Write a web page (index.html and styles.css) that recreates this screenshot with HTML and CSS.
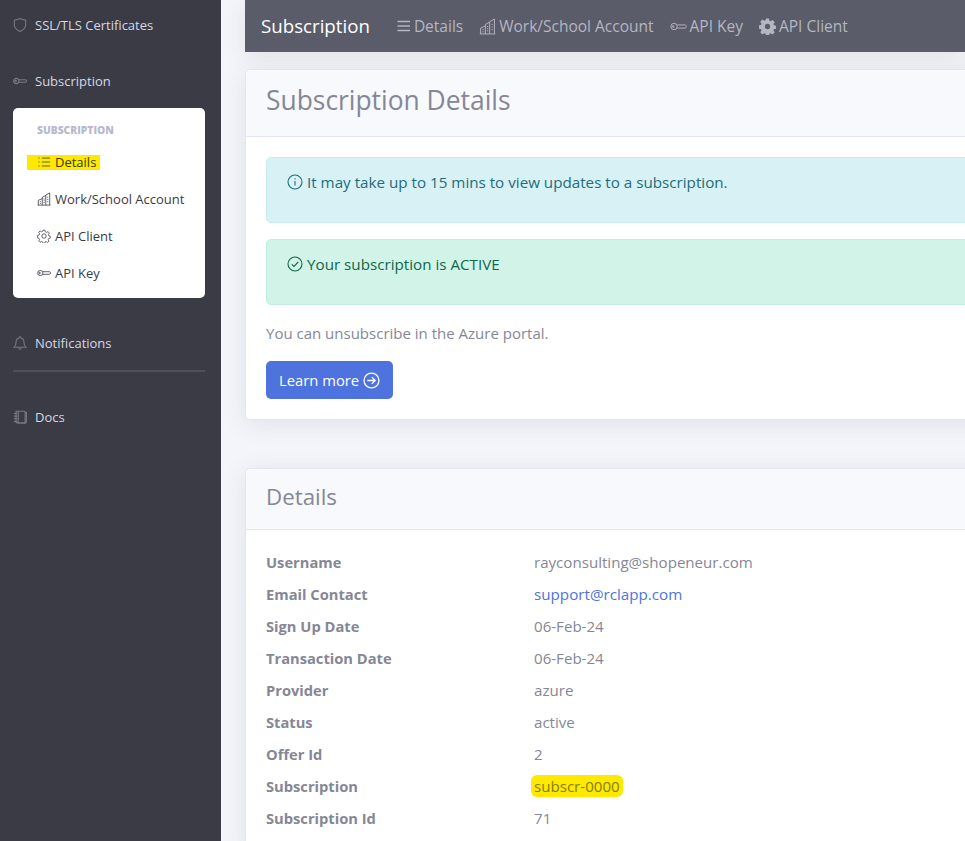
FILE: index.html
```html
<!DOCTYPE html>
<html>

<head>
  <meta charset="utf-8">
  <title>Subscription</title>
  <link rel="stylesheet" href="styles.css">
</head>

<body>

  <div class="wrapper">

    <div class="sidebar">

      <a class="navLink firstLink">
        <svg class="navIcon" viewBox="0 0 16 16"><path d="M8 .6c2.200 1 4.400 1.500 6.500 1.700v5.700c0 3.300-2.700 5.700-6.500 7.400C4.200 13.700 1.500 11.300 1.500 8V2.300C3.600 2.100 5.800 1.600 8 .6z"/></svg>
        <span>SSL/TLS Certificates</span>
      </a>

      <a class="navLink subLink">
        <svg class="navIcon" viewBox="0 0 16 16"><circle cx="3.800" cy="8" r="3"/><circle cx="3" cy="8" r=".8"/><path d="M6.800 6.500h7.700l1.200 1.500-1.200 1.500H6.800"/></svg>
        <span>Subscription</span>
      </a>

      <div class="subMenu">
        <h6 class="subTitle">SUBSCRIPTION</h6>
        <a class="subItem subItemFirst">
          <span class="marker">
            <svg class="subIcon" viewBox="0 0 16 16"><path d="M5.500 3.500H15M5.500 8H15M5.500 12.500H15"/><path d="M1.500 3.500h1.500M1.500 8h1.500M1.500 12.500h1.500"/></svg>
            Details
          </span>
        </a>
        <a class="subItem">
          <svg class="subIcon" viewBox="0 0 16 16"><path d="M.7 15h14.600M1.500 15V9.500L6 7.500M6 15V6l4-2M10 15V3.500L14.500 1v14M3.200 11h1.200M3.200 13h1.200M7.500 8h1.200M7.500 10h1.200M7.500 12h1.200M11.700 6h1.200M11.700 8.500h1.200M11.700 11h1.200"/></svg>
          Work/School Account
        </a>
        <a class="subItem">
          <svg class="subIcon" viewBox="0 0 16 16"><circle cx="8" cy="8" r="2.500"/><path d="M6.800 1h2.400l.4 2 1.500.7 1.800-1 1.500 1.800-1.100 1.700.5 1.600 1.700.5v2.200l-1.900.5-.6 1.500 1 1.700-1.600 1.500-1.700-1-1.500.6-.5 1.700H6.900l-.5-1.800-1.500-.6-1.700 1-1.600-1.600 1-1.700-.6-1.500-1.700-.5V7.300l1.800-.5.6-1.600-1-1.700 1.600-1.600 1.700 1 1.500-.6z" transform="translate(.4 .4) scale(.95)"/></svg>
          API Client
        </a>
        <a class="subItem">
          <svg class="subIcon" viewBox="0 0 16 16"><circle cx="3.800" cy="8" r="3"/><circle cx="3" cy="8" r=".8"/><path d="M6.800 6.500h7.700l1.200 1.500-1.200 1.500H6.800"/></svg>
          API Key
        </a>
      </div>

      <a class="navLink noteLink">
        <svg class="navIcon" viewBox="0 0 16 16"><path d="M8 .8c-.6 0-1 .4-1 1v.5C4.800 2.800 3.500 4.500 3.500 7c0 3-1 4.800-2.200 5.800h13.400C13.500 11.800 12.500 10 12.500 7c0-2.500-1.300-4.200-3.500-4.700v-.5c0-.6-.4-1-1-1zM6.400 14.200c.4 1.200 2.800 1.200 3.200 0"/></svg>
        <span>Notifications</span>
      </a>

      <hr class="sideLine">

      <a class="navLink">
        <svg class="navIcon" viewBox="0 0 16 16"><path d="M3.500 1.500h9.500c.5 0 .8.300.8.800v11.400c0 .5-.3.800-.8.800H3.500zM6 1.500v13M13.800 3h1.500v11l-1 1.200H5M1 4h4M1 7h4M1 10h4M1 13h4"/></svg>
        <span>Docs</span>
      </a>

    </div>

    <div class="main">

      <div class="topBar">
        <span class="brand">Subscription</span>
        <a class="topLink">
          <svg class="topIcon barsIcon" viewBox="0 0 15 17"><path class="bars" d="M1.500 3.500h12.500M1.500 8h12.500M1.500 12.500h12.500"/></svg>
          Details
        </a>
        <a class="topLink">
          <svg class="topIcon" viewBox="0 0 16 16"><path d="M.7 15h14.600M1.500 15V9.500L6 7.500M6 15V6l4-2M10 15V3.500L14.500 1v14M3.200 11h1.200M3.200 13h1.200M7.500 8h1.200M7.500 10h1.200M7.500 12h1.200M11.700 6h1.200M11.700 8.500h1.200M11.700 11h1.200"/></svg>
          Work/School Account
        </a>
        <a class="topLink">
          <svg class="topIcon" viewBox="0 0 16 16"><circle cx="3.800" cy="8" r="3"/><circle cx="3" cy="8" r=".8"/><path d="M6.800 6.500h7.700l1.200 1.500-1.200 1.500H6.800"/></svg>
          API Key
        </a>
        <a class="topLink">
          <svg class="topIcon solid" viewBox="0 0 16 16"><path fill-rule="evenodd" d="M6.600.5h2.800l.4 2.100 1.200.5 1.800-1.200 2 2-1.200 1.800.5 1.200 2.100.4v2.800l-2.100.4-.5 1.200 1.200 1.800-2 2-1.800-1.200-1.200.5-.4 2.100H6.600l-.4-2.100-1.200-.5-1.800 1.200-2-2 1.200-1.800-.5-1.200-2.100-.4V6.900l2.100-.4.5-1.200-1.200-1.800 2-2 1.800 1.200 1.200-.5zM8 5.500a2.500 2.500 0 1 0 0 5 2.500 2.500 0 0 0 0-5z"/></svg>
          API Client
        </a>
      </div>

      <div class="card firstCard">
        <div class="cardHeader headerBig">
          <h1>Subscription Details</h1>
        </div>
        <div class="cardBody">
          <div class="alert alertInfo">
            <svg class="alertIcon" viewBox="0 0 16 16"><circle cx="8" cy="8" r="7"/><path d="M8 7v4.500M8 4.300v1.200"/></svg>
            It may take up to 15 mins to view updates to a subscription.
          </div>
          <div class="alert alertOk">
            <svg class="alertIcon" viewBox="0 0 16 16"><circle cx="8" cy="8" r="7"/><path d="M4.800 8.300l2.200 2.200 4.200-4.500"/></svg>
            Your subscription is ACTIVE
          </div>
          <p class="note">You can unsubscribe in the Azure portal.</p>
          <a class="btnLearn">
            Learn more
            <svg class="btnIcon" viewBox="0 0 16 16"><circle cx="8" cy="8" r="7"/><path d="M4 8h7.500M8.300 4.800L11.500 8l-3.200 3.200"/></svg>
          </a>
        </div>
      </div>

      <div class="card secondCard">
        <div class="cardHeader">
          <h2>Details</h2>
        </div>
        <div class="detailsList">
          <div class="row"><b>Username</b><span>rayconsulting@shopeneur.com</span></div>
          <div class="row"><b>Email Contact</b><a class="mail">support@rclapp.com</a></div>
          <div class="row"><b>Sign Up Date</b><span>06-Feb-24</span></div>
          <div class="row"><b>Transaction Date</b><span>06-Feb-24</span></div>
          <div class="row"><b>Provider</b><span>azure</span></div>
          <div class="row"><b>Status</b><span>active</span></div>
          <div class="row"><b>Offer Id</b><span>2</span></div>
          <div class="row"><b>Subscription</b><span><span class="mark2">subscr-0000</span></span></div>
          <div class="row"><b>Subscription Id</b><span>71</span></div>
        </div>
      </div>

    </div>

  </div>

</body>

</html>
```

FILE: styles.css
```css
html, body {
  margin: 0;
  height: 841px;
  overflow: hidden;
}

body {
  font-family: "Open Sans", "Noto Sans", sans-serif;
  font-size: 15px;
  color: #858796;
  background-color: #f3f5fa;
}

.wrapper {
  display: flex;
  height: 841px;
}

.sidebar {
  width: 221px;
  flex: none;
  box-sizing: border-box;
  padding: 15px 16px 0 13px;
  background-color: #3a3b45;
}

.navLink {
  display: flex;
  align-items: center;
  gap: 8px;
  height: 20px;
  font-size: 13px;
  color: #d5d8e4;
}

.navIcon {
  width: 14px;
  height: 16px;
  flex: none;
  fill: none;
  stroke: #787a85;
  stroke-width: 1.200;
}

.subLink {
  margin-top: 36px;
}

.subMenu {
  height: 190px;
  margin-top: 17px;
  box-sizing: border-box;
  padding: 16px 0 0 24px;
  background-color: #fff;
  border-radius: 5px;
}

.subTitle {
  margin: 0;
  font-size: 10.300px;
  line-height: 12px;
  font-weight: 800;
  color: #b7b9cc;
}

.subItem {
  display: flex;
  align-items: center;
  gap: 4px;
  height: 20px;
  margin-top: 17px;
  font-size: 13px;
  color: #3a3b45;
}

.subItemFirst {
  margin: 16px 0 0 -10px;
}

.marker {
  display: flex;
  align-items: center;
  gap: 4px;
  height: 15px;
  padding: 0 4px 0 10px;
  color: #38380a;
  background-color: #ffe900;
}

.subIcon {
  width: 14px;
  height: 14px;
  flex: none;
  fill: none;
  stroke: #3a3b45;
  stroke-width: .9;
}

.noteLink {
  margin-top: 35px;
}

.sideLine {
  height: 2px;
  margin: 17px 0 35px;
  border: none;
  background-color: #4f505b;
}

.main {
  flex: 1;
  min-width: 0;
  padding-left: 24px;
  overflow: hidden;
}

.topBar {
  display: flex;
  align-items: center;
  height: 52px;
  box-sizing: border-box;
  padding-left: 16px;
  background-color: #5a5c69;
  box-shadow: 0 4px 24px rgba(58, 59, 69, .1);
}

.brand {
  margin: -2px 26px 0 0;
  font-size: 18.700px;
  color: #fff;
}

.topLink {
  display: flex;
  align-items: center;
  gap: 3px;
  margin-right: 16px;
  font-size: 15.500px;
  color: #b4b6c1;
}

.topIcon {
  width: 17px;
  height: 17px;
  flex: none;
  fill: none;
  stroke: #b4b6c1;
  stroke-width: .9;
}

.topIcon.barsIcon {
  width: 15px;
}

.topIcon .bars {
  stroke-width: 1.700;
}

.topIcon.solid {
  fill: #b4b6c1;
  stroke: none;
}

.card {
  width: 780px;
  background-color: #fff;
  border: 1px solid #e3e6f0;
  border-radius: 5px;
  box-shadow: 0 4px 24px rgba(58, 59, 69, .1);
}

.firstCard {
  margin-top: 17px;
  height: 351px;
  box-sizing: border-box;
}

.secondCard {
  margin-top: 48px;
}

.cardHeader {
  display: flex;
  align-items: center;
  height: 54px;
  padding: 0 0 6px 20px;
  background-color: #f8f9fc;
  border-bottom: 1px solid #e3e6f0;
  border-radius: 5px 5px 0 0;
}

.headerBig {
  height: 60px;
}

h1 {
  margin: 0;
  font-size: 26.400px;
  font-weight: 400;
}

h2 {
  margin: 0;
  font-size: 22.300px;
  font-weight: 400;
}

.cardBody {
  padding: 20px;
}

.alert {
  display: flex;
  align-items: flex-start;
  gap: 4px;
  height: 66px;
  box-sizing: border-box;
  margin-bottom: 16px;
  padding: 13px 20px;
  line-height: 22px;
  font-size: 15.200px;
  border: 1px solid;
  border-radius: 5px;
}

.alertInfo {
  color: #1f6d7c;
  background-color: #d7f1f5;
  border-color: #c7ebf1;
}

.alertOk {
  color: #0f6848;
  background-color: #d2f4e8;
  border-color: #bff0de;
}

.alertIcon {
  width: 16px;
  height: 16px;
  margin-top: 3px;
  flex: none;
  fill: none;
  stroke: currentColor;
  stroke-width: 1.100;
}

.note {
  margin: 17px 0 17px;
  font-size: 15px;
  line-height: 22px;
}

.btnLearn {
  display: inline-flex;
  align-items: center;
  gap: 4px;
  height: 38px;
  box-sizing: border-box;
  padding: 0 13px 0 13px;
  font-size: 14.800px;
  color: #fff;
  background-color: #4e73df;
  border-radius: 5px;
}

.btnIcon {
  width: 17px;
  height: 17px;
  fill: none;
  stroke: #fff;
  stroke-width: 1.200;
}

.detailsList {
  padding: 16px 20px;
}

.row {
  display: grid;
  grid-template-columns: 268px 1fr;
  height: 32px;
  align-items: center;
  font-size: 15.100px;
}

.row b {
  font-size: 14.700px;
  font-weight: 700;
}

.mail {
  font-size: 15.200px;
  color: #4e73df;
}

.mark2 {
  padding: 1px 3px;
  margin-left: -3px;
  color: #80800f;
  background-color: #ffe900;
  border-radius: 6px;
}
```
